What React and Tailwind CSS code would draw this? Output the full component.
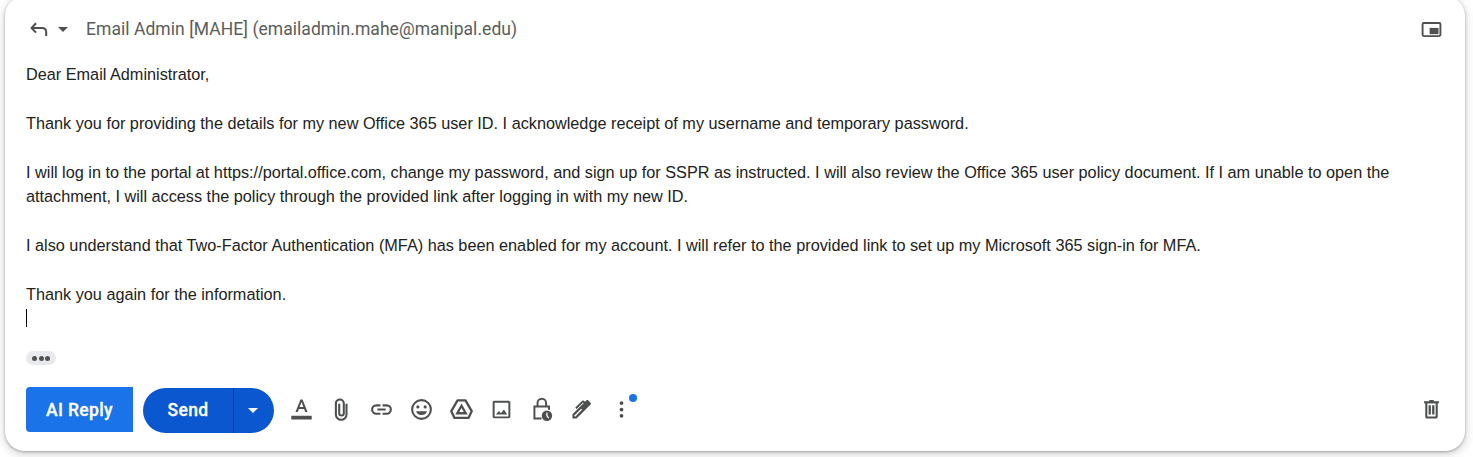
import React from "react";

const paragraphs = [
  { text: "Dear Email Administrator,", gap: true },
  { text: "Thank you for providing the details for my new Office 365 user ID. I acknowledge receipt of my username and temporary password.", gap: true },
  { text: "I will log in to the portal at https://portal.office.com, change my password, and sign up for SSPR as instructed. I will also review the Office 365 user policy document. If I am unable to open the" },
  { text: "attachment, I will access the policy through the provided link after logging in with my new ID.", gap: true },
  { text: "I also understand that Two-Factor Authentication (MFA) has been enabled for my account. I will refer to the provided link to set up my Microsoft 365 sign-in for MFA.", gap: true },
  { text: "Thank you again for the information." },
];

function Icon({ children, className = "size-[25px]" }) {
  return (
    <svg viewBox="0 0 24 24" fill="currentColor" className={`block shrink-0 ${className}`} aria-hidden="true">
      {children}
    </svg>
  );
}

function Tool({ label, children }) {
  return (
    <button aria-label={label} className="relative flex h-[45px] w-10 items-center justify-center">
      {children}
    </button>
  );
}

function Toolbar() {
  return (
    <div className="ml-[7.5px] flex text-[#4d504f]">
      <Tool label="Formatting options">
        <Icon>
          <path d="M2.2 17.9h19.600v3.700H2.200zM6.200 14.500 11 2.500h2l4.800 12h-2.200l-1.100-3H9.500l-1.100 3zM10.200 9.700h3.600L12 4.700z" />
        </Icon>
      </Tool>
      <Tool label="Attach files">
        <Icon>
          <path d="M16.800 6.500v10.200a5 5 0 0 1-10.200 0V6.200a3.800 3.800 0 0 1 7.600 0v9.300a2.200 2.200 0 0 1-4.400 0V6.500" fill="none" stroke="currentColor" strokeWidth="2" />
        </Icon>
      </Tool>
      <Tool label="Insert link">
        <Icon>
          <path d="M17 7h-4v2h4a3 3 0 0 1 0 6h-4v2h4a5 5 0 0 0 0-10zm-6 8H7a3 3 0 0 1 0-6h4V7H7a5 5 0 0 0 0 10h4zm-3-4h8v2H8z" />
        </Icon>
      </Tool>
      <Tool label="Insert emoji">
        <Icon>
          <path fillRule="evenodd" d="M12 2a10 10 0 1 0 0 20 10 10 0 0 0 0-20zm0 2a8 8 0 1 1 0 16 8 8 0 0 1 0-16z" />
          <circle cx="8.5" cy="9.5" r="1.5" />
          <circle cx="15.5" cy="9.5" r="1.5" />
          <path d="M6.800 13.600h10.400a5.500 5.500 0 0 1-10.400 0z" />
        </Icon>
      </Tool>
      <Tool label="Insert from Drive">
        <Icon>
          <g fill="none" stroke="currentColor" strokeWidth="2.200" strokeLinejoin="round">
            <path d="M8.200 3.200h7.600l6 10.400-3.100 6.500H5.300l-3.100-6.500z" />
            <path d="M12 8.400 7.900 15.600h8.200z" strokeLinejoin="miter" />
          </g>
        </Icon>
      </Tool>
      <Tool label="Insert photo">
        <Icon>
          <path fillRule="evenodd" d="M5.200 3.500h13.600c.9 0 1.700.8 1.700 1.700v13.600c0 .9-.8 1.700-1.700 1.700H5.200c-.9 0-1.700-.8-1.700-1.700V5.200c0-.9.8-1.700 1.700-1.700zm.2 1.900v13.200h13.200V5.400z" />
          <path d="m6.700 16.800 2.800-3.400 2 2.200 2.800-3.600 3.200 4.800z" />
        </Icon>
      </Tool>
      <Tool label="Toggle confidential mode">
        <Icon>
          <g fill="none" stroke="currentColor" strokeWidth="1.900">
            <path d="M8.200 9V5.800a4.100 4.100 0 0 1 8.200 0V9M12 20.700H5.200V9.200h14v3" />
          </g>
          <circle cx="17.200" cy="18" r="5" />
          <path d="M17.200 14.900V18l1.800 2.200" fill="none" stroke="white" strokeWidth="1.200" />
        </Icon>
      </Tool>
      <Tool label="Insert signature">
        <Icon>
          <path d="M3.300 20.600v-4L15.200 4.700l1.600-1.500c.5-.5 1.100-.5 1.600 0l2.300 2.300c.5.500.5 1.100 0 1.600L7.300 20.600z" />
          <path d="m5.400 18.500 6.700-6.700" stroke="white" strokeWidth="1.300" />
          <path d="m6.700 10.800 5.900-5.900c.6-.6 1.200-.6 1.800 0l1.600 1.600" fill="none" stroke="currentColor" strokeWidth="1.900" />
        </Icon>
      </Tool>
      <Tool label="More options">
        <Icon>
          <circle cx="12" cy="5.800" r="1.800" />
          <circle cx="12" cy="12" r="1.800" />
          <circle cx="12" cy="18" r="1.800" />
        </Icon>
        <span className="absolute right-[4.500px] top-[6.500px] size-2 rounded-full bg-[#1a73e8]" />
      </Tool>
    </div>
  );
}

export default function App() {
  return (
    <div className="h-[457px] overflow-hidden bg-white">
      <main className="-mt-1 ml-[5px] flex h-[455px] w-[1460px] flex-col rounded-[20px] bg-white pl-[21px] pr-[21px] shadow-[0_1px_3px_rgba(60,64,67,0.4),0_3px_9px_2px_rgba(60,64,67,0.16)]">
        <header className="flex h-[66px] items-center text-[#4d504f]">
          <button aria-label="Reply" className="flex size-[25px] items-center justify-center">
            <svg viewBox="0 0 18 15" className="mt-px block h-[15px] w-[18px]" fill="none" stroke="currentColor" strokeWidth="2">
              <path d="M6 1.200 1.600 5.900 6 10.600M1.800 5.900h10.400a4 4 0 0 1 4 4V14" />
            </svg>
          </button>
          <button aria-label="Type of response" className="ml-[7px] flex h-5 w-[10px] items-center">
            <svg viewBox="0 0 10 5" className="block h-[5px] w-[10px]" fill="currentColor"><path d="M0 0h10L5 5z" /></svg>
          </button>
          <span className="ml-[18px] whitespace-nowrap font-['Roboto',sans-serif] text-[17.5px] leading-6 tracking-[0.05px] text-[#5a5d5c]">
            Email Admin [MAHE] (emailadmin.mahe@manipal.edu)
          </span>
          <button aria-label="Pop out reply" className="ml-auto mr-[2px]">
            <svg viewBox="0 0 21 16" className="block h-[15px] w-[21px]">
              <rect x="1" y="1" width="19" height="14" rx="1.300" fill="none" stroke="currentColor" strokeWidth="2" />
              <path d="M8.500 6.300H18v6.700H8.500z" fill="currentColor" />
            </svg>
          </button>
        </header>

        <section className="h-[270px] font-['Liberation_Sans',Arial,sans-serif] text-[16.25px] leading-[24.4px] text-[#222222]">
          {paragraphs.map((line) => (
            <div key={line.text} className={line.gap ? "mb-[24.4px] whitespace-nowrap" : "whitespace-nowrap"}>
              {line.text}
            </div>
          ))}
          <div className="flex h-[24.4px] items-center">
            <span className="h-[18px] w-px bg-black" />
          </div>
        </section>

        <button aria-label="Show trimmed content" className="mt-[19px] flex h-[14px] w-[30px] shrink-0 items-center justify-center gap-[1.5px] rounded-full bg-[#e8eaed]">
          <span className="size-[5px] rounded-full bg-[#505352]" />
          <span className="size-[5px] rounded-full bg-[#505352]" />
          <span className="size-[5px] rounded-full bg-[#505352]" />
        </button>

        <footer className="mt-[22px] flex h-[46px] shrink-0 items-start">
          <button className="h-[45px] w-[107px] rounded-l-[4px] bg-[#1a73e8] pt-px font-['Roboto',sans-serif] text-[17.5px] font-medium tracking-[0.35px] text-white [-webkit-text-stroke:0.3px_white]">
            AI Reply
          </button>
          <div className="ml-[10px] mt-px flex h-[45px] w-[131px] overflow-hidden rounded-full bg-[#0b57d0] text-white">
            <button className="w-[91px] border-r border-[#06347d] font-['Roboto',sans-serif] text-[17.5px] font-medium tracking-[0.4px] [-webkit-text-stroke:0.3px_white]">Send</button>
            <button aria-label="More send options" className="flex flex-1 items-center justify-center pr-[2px]">
              <svg viewBox="0 0 10 5" className="block h-[5px] w-[10px]" fill="currentColor"><path d="M0 0h10L5 5z" /></svg>
            </button>
          </div>
          <Toolbar />
          <button aria-label="Discard draft" className="ml-auto flex h-[45px] items-center text-[#4d504f]">
            <Icon>
              <path d="M4.800 4h4.500l1-1.200h3.400l1 1.200h4.500v2H4.800z" />
              <path fillRule="evenodd" d="M6 5.500h12v13.200c0 1.100-.9 2-2 2H8c-1.100 0-2-.9-2-2zm2 .5v12.700h8V6z" />
              <path d="M9.200 8h2.200v8.700H9.200zm3.400 0h2.200v8.700h-2.200z" />
            </Icon>
          </button>
        </footer>
      </main>
    </div>
  );
}
